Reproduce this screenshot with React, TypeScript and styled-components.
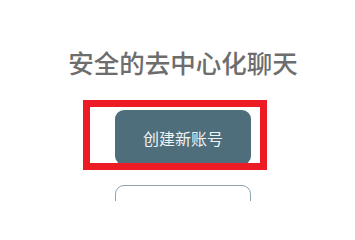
import React from "react";
import styled, { createGlobalStyle } from "styled-components";

const Global = createGlobalStyle`
  html, body {
    margin: 0;
    padding: 0;
    background: #ffffff;
    overflow: hidden;
  }
  body {
    font-family: "Noto Sans CJK SC", "Noto Sans", sans-serif;
  }
`;

const Page = styled.div`
  width: 355px;
  height: 201px;
  box-sizing: border-box;
  padding: 48px 0 0 11px;
  display: flex;
  flex-direction: column;
  align-items: center;
  overflow: hidden;
`;

const Title = styled.h1`
  margin: 0;
  font-size: 25.5px;
  line-height: 28px;
  font-weight: 500;
  color: #6d6d6d;
  letter-spacing: 0;
  white-space: nowrap;
`;

const Actions = styled.div`
  margin-top: 34px;
  display: flex;
  flex-direction: column;
  gap: 20px;
`;

const Highlighted = styled.div`
  position: relative;
`;

const Highlight = styled.div`
  position: absolute;
  top: -10px;
  left: -32px;
  right: -16px;
  bottom: -5px;
  border: 7.5px solid #ed1c24;
  pointer-events: none;
`;

const Button = styled.button<{ $variant: "primary" | "outline" }>`
  width: 136px;
  height: 55px;
  box-sizing: border-box;
  border-radius: 9px;
  font-family: "Noto Sans CJK SC", "Noto Sans", sans-serif;
  font-size: 16px;
  padding: 0;
  display: flex;
  align-items: center;
  justify-content: center;
  background: ${(p) => (p.$variant === "primary" ? "#4e6e7c" : "#ffffff")};
  color: ${(p) => (p.$variant === "primary" ? "#eef3f4" : "#4e6e7c")};
  border: ${(p) => (p.$variant === "primary" ? "none" : "1.5px solid #90a2ad")};
`;

export default function App() {
  return (
    <>
      <Global />
      <Page>
        <Title>安全的去中心化聊天</Title>
        <Actions>
          <Highlighted>
            <Button $variant="primary">创建新账号</Button>
            <Highlight />
          </Highlighted>
          <Button $variant="outline" aria-label="导入账号" />
        </Actions>
      </Page>
    </>
  );
}
